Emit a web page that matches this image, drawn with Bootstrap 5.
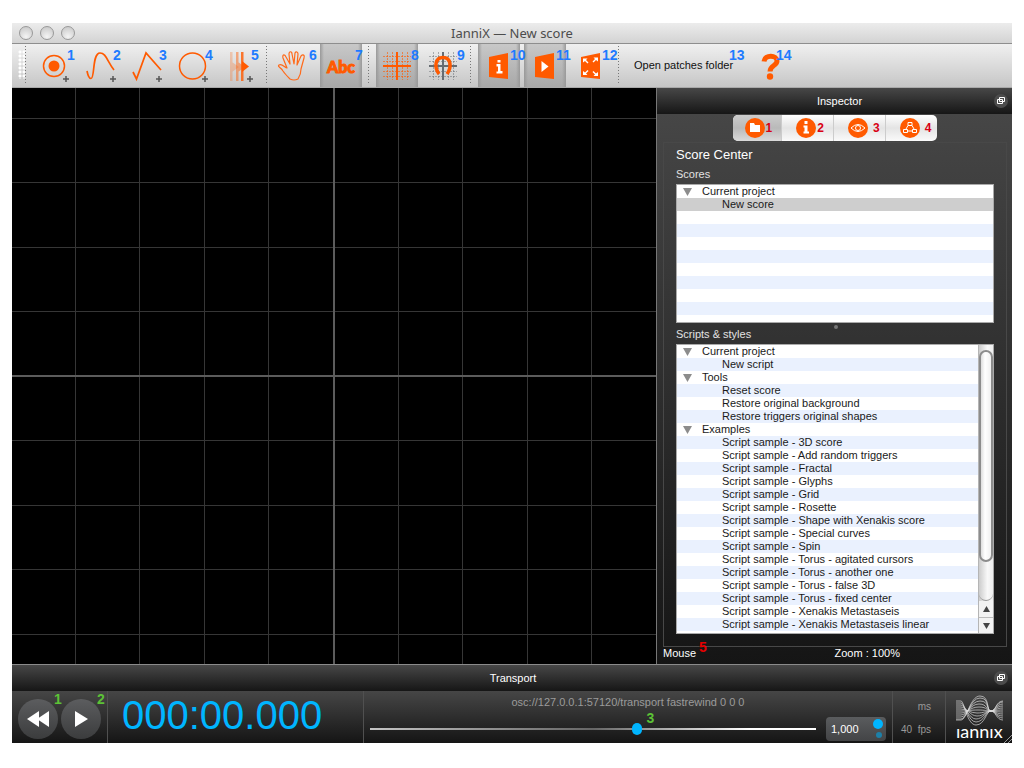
<!DOCTYPE html>
<html lang="en">
<head>
<meta charset="utf-8">
<meta name="viewport" content="width=device-width, initial-scale=1">
<title>IanniX — New score</title>
<link href="https://cdn.jsdelivr.net/npm/bootstrap@5.3.0/dist/css/bootstrap.min.css" rel="stylesheet">
<style>
body{font-family:"Liberation Sans",Arial,sans-serif;font-size:11px;line-height:13px;background:#fff;color:#fff;padding:23px 12px 25px}
button{font:inherit}
.plain-btn{border:0;background:none;padding:0;color:inherit}
.shrinkable{min-height:0}
.title-bar{height:21px;background:linear-gradient(#ececec,#d3d3d3);border-bottom:1px solid #8e8e8e;color:#4c4c4c;padding:0 7px}
.title-bar h1{font:13px/20px "Noto Sans",sans-serif}
.win-dots{gap:7px;width:56px}
.win-dot{width:14px;height:14px;border-radius:50%;border:1px solid #999;background:radial-gradient(circle at 50% 80%,#f4f4f4,#c4c4c4)}
.tool-bar{height:44px;background:linear-gradient(#f0f0f0,#c6c6c6);border-bottom:1px solid #a9a9a9;color:#111}
.tool-sep{width:1px;margin:2px 7px 2px 6px;background:repeating-linear-gradient(#777 0 1px,transparent 1px 3px)}
.grip{width:7px;margin:6px 0 8px 6px;background:radial-gradient(circle,#fff 1px,transparent 2px) 0 0/4px 4px}
.grip + .tool-sep{margin:2px 8px 2px 0}
.tool{width:42px;position:relative}
.tool.active{background:linear-gradient(90deg,#999,transparent 4px,transparent 38px,#999),linear-gradient(#c8c8c8,#a8a8a8)}
.tool svg{display:block;width:42px;height:42px}
.tip{position:absolute;z-index:1;top:5px;font:bold 14px/12px "Liberation Sans",Arial,sans-serif;color:#1e7bff}
.tool .tip{left:35px}
.adders .tip{left:33px}
.tool .tip.wide{left:32px}
.folder-btn{width:102px;position:relative;text-align:left;white-space:nowrap}
.folder-btn .tip{left:95px}
.dock-head{height:26px;background:linear-gradient(#474747,#161616)}
.float-btn{width:14px;height:14px;border-radius:50%;background:#4c4c4c}
.score-view{background:#000;min-width:0;min-height:0}
.inspector{width:356px;border-left:1px solid #777}
.inspector-body{background:linear-gradient(#464646,#151515)}
.tabs-row{width:204px;height:26px;border-radius:5px;overflow:hidden;background:linear-gradient(#fff,#e4e4e4 50%,#fafafa);margin-top:1px}
.tab-btn{flex:1 1 0;padding:0 0 0 13px;display:flex;align-items:center;border-right:1px solid #ccc;color:#d90013;font:bold 12px/12px "Liberation Sans",Arial,sans-serif}
.tab-btn:last-child{border-right:0}
.tab-btn.active{padding-left:11px;background:linear-gradient(#ccc,#b9b9b9 50%,#dadada)}
.group-box{border:1px solid #484848;margin:1px 5px 0 6px;padding:4px 12px 12px}
.group-box h2{font-size:13px;line-height:16px}
.list-label{padding:5px 0 3px;color:#e2e2e2}
.splitter{width:4px;height:4px;right:156px;top:2px;border-radius:50%;background:#777}
.tree{background:repeating-linear-gradient(#fff 0 13px,#eaf1fe 13px 26px);border:1px solid #aaa;color:#1a1a1a;overflow:hidden;min-height:0}
.tree ul{list-style:none;margin:0;padding:0}
.tree li{height:13px;padding-left:45px;white-space:nowrap}
.tree li.branch{padding-left:6px;display:flex;align-items:center}
.tree li.branch svg{width:9px;height:8px;margin-right:10px}
.tree li.selected{background:#cecece}
.scores{flex:138 1 0}
.scripts{flex:290 1 0}
.scroll-col{width:15px;border-left:1px solid #b5b5b5;background:linear-gradient(90deg,#ccc,#f8f8f8 60%,#eee)}
.scroll-thumb{flex:213 1 0;margin-top:5px;border:2px solid #8c8c8c;border-radius:7px;background:linear-gradient(90deg,#ddd,#fff 40%,#f0f0f0)}
.scroll-rest{flex:39 1 0;border-bottom:1px solid #999;border-radius:0 0 7px 7px}
.arrow-btn{height:16px;background:#f2f2f2;display:flex;align-items:center;justify-content:center}
.arrow-btn + .arrow-btn{border-top:1px solid #bbb}
.status{height:17px;padding:0 6px}
.status .tip{color:#e60000;left:42px;top:-6px}
.transport{border-top:1px solid #8b8b8b}
.transport-body{height:52px;background:linear-gradient(#464646,#151515);position:relative}
.play-group{padding:4px 6px 0;gap:3px}
.round-btn{width:40px;height:40px;border-radius:50%;background:linear-gradient(#5c5d5f,#3b3c3d);position:relative}
.transport .tip{color:#5cc236}
.round-btn .tip{left:36px;top:-6px}
.clock{width:256px;padding-left:14px;font-size:40px;line-height:48px;color:#00b5ff}
.vline{border-left:1px solid #505050}
.position{padding:5px 6px 2px}
.osc{color:#9b9b9b}
.pos-slider{appearance:none;width:100%;height:14px;background:linear-gradient(90deg,#c4c4c4,#666 50%,#fff 85%) center/100% 2px no-repeat;margin:0;display:block}
.pos-slider::-webkit-slider-thumb{appearance:none;width:10px;height:12px;border-radius:5px;background:#00b5ff}
.slider-box{margin-right:10px;position:relative}
.slider-box .tip{left:62%;top:-10px}
.speed{width:60px;height:24px;border-radius:4px;background:linear-gradient(#5a5c5e,#434446)}
.speed input{width:42px;border:0;background:none;color:#fff;padding:0 0 0 5px}
.rate{width:53px;color:#999;font-size:10px;padding:9px 14px 0 0;gap:10px}
.brand{width:67px;padding:4px 0 0 10px}
.brand text{font:18px Lato,sans-serif}
.resize-mark{position:absolute;right:0;bottom:0}
</style>
</head>
<body class="d-flex flex-column vh-100">
<header class="title-bar d-flex align-items-center">
  <div class="win-dots d-flex align-items-center"><span class="win-dot"></span><span class="win-dot"></span><span class="win-dot"></span></div>
  <h1 class="m-0 flex-grow-1 text-center">IanniX — New score</h1><div class="win-dots"></div>
</header>

<nav class="tool-bar d-flex" aria-label="Tools">
  <span class="grip"></span><span class="tool-sep"></span>
  <div class="adders d-flex gap-1">
    <button class="plain-btn tool" aria-label="Add trigger"><svg viewBox="0 0 42 42" fill="none" stroke="#ff5a00" stroke-width="1.5"><circle cx="20" cy="21" r="10.5"/><circle cx="20" cy="21" r="5.5" fill="#ff5a00" stroke="none"/><path d="M32 31v6M29 34h6" stroke="#555" stroke-width="1.500"/></svg><span class="tip">1</span></button>
    <button class="plain-btn tool" aria-label="Add curve"><svg viewBox="0 0 42 42" fill="none" stroke="#ff5a00" stroke-width="1.7"><path d="M7 26C8 31 9 33.500 11 33.500C15 33.500 12 8 20 8C26 8 27 16 34 25"/><path d="M33 31v6M30 34h6" stroke="#555" stroke-width="1.500"/></svg><span class="tip">2</span></button>
    <button class="plain-btn tool" aria-label="Add straight curve"><svg viewBox="0 0 42 42" fill="none" stroke="#ff5a00" stroke-width="1.7"><path d="M7 27L10.500 34L20 8L35 25"/><path d="M33 31v6M30 34h6" stroke="#555" stroke-width="1.500"/></svg><span class="tip">3</span></button>
    <button class="plain-btn tool" aria-label="Add ellipse"><svg viewBox="0 0 42 42" fill="none" stroke="#ff5a00" stroke-width="1.5"><circle cx="20.500" cy="21" r="13"/><path d="M33 31v6M30 34h6" stroke="#555" stroke-width="1.500"/></svg><span class="tip">4</span></button>
    <button class="plain-btn tool" aria-label="Add cursor"><svg viewBox="0 0 42 42" fill="#ff5a00"><g opacity=".25"><path d="M12 7h2.500v29H12zM14 17l7 5l-7 5z"/></g><g opacity=".45"><path d="M18 7h2.500v29H18zM20 17l7 5l-7 5z"/></g><path d="M23 7h2.500v29H23z" opacity=".8"/><path d="M24 16l7 5.500l-7 5.500z"/><path d="M32 31v6M29 34h6" stroke="#555" stroke-width="1.500"/></svg><span class="tip">5</span></button>
  </div>
  <span class="tool-sep"></span>
  <div class="d-flex gap-1">
    <button class="plain-btn tool" aria-label="Move"><svg viewBox="0 0 42 42" fill="none" stroke="#ff6a1a" stroke-width="1.200" stroke-linejoin="round"><path d="M16 34C13 31 11 29 9 26C7 22 3 22 5 20C8 18 11 23 13 23L9 13C8 9 11 9 12 12L16 19L15 9C15 6 18 6 18 9L20 19L21 8C22 6 24 7 24 9L23 20L27 11C29 9 31 10 30 13L27 24C27 29 26 31 24 34Q20 36 16 34Z"/></svg><span class="tip">6</span></button>
    <button class="plain-btn tool active" aria-label="Labels"><svg viewBox="0 0 42 42"><text x="21" y="28" text-anchor="middle" font-family="Lato" font-weight="900" font-size="16" fill="#ff5a00" stroke="#ff5a00">Abc</text></svg><span class="tip">7</span></button>
  </div>
  <span class="tool-sep"></span>
  <div class="d-flex gap-1">
    <button class="plain-btn tool active" aria-label="Grid"><svg viewBox="0 0 42 42" fill="none" stroke="#ff5a00"><path d="M7 11.500h28M7 16.500h28M7 26.500h28M7 31.500h28M11.500 7v28M16.500 7v28M26.500 7v28M31.500 7v28" stroke-dasharray="2 1" opacity=".6"/><path d="M7 21h28M21 7v28" stroke-width="2"/></svg><span class="tip">8</span></button>
    <button class="plain-btn tool" aria-label="Snap to grid"><svg viewBox="0 0 42 42" fill="none" stroke="#666c72"><path d="M7 11.500h28M7 16.500h28M7 26.500h28M7 31.500h28M11.500 7v28M16.500 7v28M26.500 7v28M31.500 7v28" stroke-dasharray="2 1" opacity=".5"/><path d="M7 21h28M21 7v28" stroke-width="2"/><path d="M17 29C12 22 13 12.500 21 12.500S30 22 25 29" stroke="#ff5a00" stroke-width="3.500"/></svg><span class="tip">9</span></button>
  </div>
  <span class="tool-sep"></span>
  <div class="d-flex gap-1">
    <button class="plain-btn tool active" aria-label="Show inspector"><svg viewBox="0 0 42 42" fill="#ff5a00"><path d="M11 12l19-4v26l-19-2z"/><path d="M18.500 19h4v7h2v2.500h-6v-2h1.500v-5h-1.500zM19.500 15h3v2.500h-3z" fill="#fff"/></svg><span class="tip wide">10</span></button>
    <button class="plain-btn tool active" aria-label="Show transport"><svg viewBox="0 0 42 42" fill="#ff5a00"><path d="M11 12l19-4v26l-19-2z"/><path d="M17.500 16l7 5.500l-7 5.500z" fill="#fff"/></svg><span class="tip wide">11</span></button>
    <button class="plain-btn tool" aria-label="Full screen"><svg viewBox="0 0 42 42" fill="#ff5a00"><path d="M11 12l19-4v26l-19-2z"/><path d="M13 13.500h4.500l-1.500 1.500l2.500 2.500l-1 1l-2.500-2.500l-2 1.500zM28 12.500h-4.500l1.500 1.500l-2.500 2.500l1 1l2.500-2.500l2 1.500zM13 30h4.500l-1.500-1.500l2.500-2.500l-1-1l-2.500 2.500l-2-1.500zM28 31h-4.500l1.500-1.500l-2.500-2.500l1-1l2.500 2.500l2-1.500z" fill="#fff"/></svg><span class="tip wide">12</span></button>
  </div>
  <span class="tool-sep"></span>
  <button class="plain-btn folder-btn ms-2">Open patches folder<span class="tip">13</span></button>
  <button class="plain-btn tool ms-2" aria-label="Help"><svg viewBox="0 0 42 42" fill="none" stroke="#ff5a00" stroke-width="5"><path d="M20 16.500C21 9 33 10 33 16C33 21 26 20 26 26.500"/><circle cx="26" cy="31.500" r="3.200" fill="#ff5a00" stroke="none"/></svg><span class="tip wide">14</span></button>
</nav>

<main class="shrinkable d-flex flex-grow-1">
  <section class="score-view flex-grow-1" aria-label="Score">
    <svg class="d-block w-100 h-100" viewBox="0 0 644 576" preserveAspectRatio="xMidYMid slice" shape-rendering="crispEdges"><path fill="#363636" d="M63 0h1v576h-1zM127 0h1v576h-1zM192 0h1v576h-1zM256 0h1v576h-1zM386 0h1v576h-1zM450 0h1v576h-1zM515 0h1v576h-1zM579 0h1v576h-1zM0 30h644v1H0zM0 94h644v1H0zM0 159h644v1H0zM0 223h644v1H0zM0 352h644v1H0zM0 417h644v1H0zM0 481h644v1H0zM0 546h644v1H0z"/><path fill="#5c5c5c" d="M321 0h2v576h-2zM0 287h644v2H0z"/></svg>
  </section>
  <aside class="inspector d-flex flex-column flex-shrink-0">
    <div class="dock-head d-flex align-items-center px-1"><span class="flex-grow-1 text-center ps-4">Inspector</span><button class="plain-btn float-btn" aria-label="Float inspector"><svg class="d-block" width="14" height="14" fill="#4c4c4c" stroke="#fff"><path d="M5.500 3.500h5v4h-5zM3.500 5.500h5v4h-5z"/></svg></button></div>
    <div class="inspector-body shrinkable d-flex flex-column flex-grow-1">
      <div class="tabs-row d-flex mx-auto flex-shrink-0">
        <button class="plain-btn tab-btn active" aria-label="Files"><svg width="22" height="22"><circle cx="11" cy="11" r="10" fill="#ff5a00"/><path d="M6 6h4l1 2h5v7H6z" fill="#fff"/></svg>1</button>
        <button class="plain-btn tab-btn" aria-label="Info"><svg width="22" height="22"><circle cx="11" cy="11" r="10" fill="#ff5a00"/><path d="M9.500 4h3v3h-3zM8.500 8.500h4v6h1.500v2H8.500v-2h1v-4h-1z" fill="#fff"/></svg>2</button>
        <button class="plain-btn tab-btn gap-1" aria-label="View"><svg width="22" height="22" fill="none" stroke="#fff"><circle cx="11" cy="11" r="10" fill="#ff5a00" stroke="none"/><path d="M4 11Q11 4 18 11Q11 18 4 11Z"/><circle cx="11" cy="11" r="2.500"/></svg>3</button>
        <button class="plain-btn tab-btn gap-1" aria-label="Network"><svg width="22" height="22" fill="none" stroke="#fff"><circle cx="11" cy="11" r="10" fill="#ff5a00" stroke="none"/><path d="M9 5.500h4v3H9zM4.500 12.500h4v3h-4zM13.500 12.500h4v3h-4zM9 8.500L7 12M13 8.500L15 12M8.500 14h5"/></svg>4</button>
      </div>
      <div class="group-box shrinkable d-flex flex-column flex-grow-1">
        <h2 class="m-0 fw-normal">Score Center</h2>
        <div class="list-label">Scores</div>
        <div class="tree scores"><ul>
          <li class="branch"><svg><path d="M0 0h9L4.500 8z" fill="#8c8c8c"/></svg>Current project</li><li class="selected">New score</li>
        </ul></div>
        <div class="list-label position-relative">Scripts &amp; styles<span class="splitter position-absolute"></span></div>
        <div class="tree scripts d-flex">
          <ul class="flex-grow-1">
            <li class="branch"><svg><path d="M0 0h9L4.500 8z" fill="#8c8c8c"/></svg>Current project</li><li>New script</li>
            <li class="branch"><svg><path d="M0 0h9L4.500 8z" fill="#8c8c8c"/></svg>Tools</li><li>Reset score</li><li>Restore original background</li><li>Restore triggers original shapes</li>
            <li class="branch"><svg><path d="M0 0h9L4.500 8z" fill="#8c8c8c"/></svg>Examples</li><li>Script sample - 3D score</li><li>Script sample - Add random triggers</li><li>Script sample - Fractal</li><li>Script sample - Glyphs</li><li>Script sample - Grid</li><li>Script sample - Rosette</li><li>Script sample - Shape with Xenakis score</li><li>Script sample - Special curves</li><li>Script sample - Spin</li><li>Script sample - Torus - agitated cursors</li><li>Script sample - Torus - another one</li><li>Script sample - Torus - false 3D</li><li>Script sample - Torus - fixed center</li><li>Script sample - Xenakis Metastaseis</li><li>Script sample - Xenakis Metastaseis linear</li>
          </ul>
          <div class="scroll-col d-flex flex-column"><div class="scroll-thumb"></div><div class="scroll-rest"></div>
            <button class="plain-btn arrow-btn" aria-label="Scroll up"><svg width="7" height="6"><path d="M0 6h7L3.500 0z" fill="#444"/></svg></button>
            <button class="plain-btn arrow-btn" aria-label="Scroll down"><svg width="7" height="6"><path d="M0 0h7L3.500 6z" fill="#444"/></svg></button></div>
        </div>
      </div>
      <div class="status d-flex position-relative"><span class="col-6">Mouse</span><span class="tip">5</span><span>Zoom : 100%</span></div>
    </div>
  </aside>
</main>

<footer class="transport">
  <div class="dock-head d-flex align-items-center px-1"><span class="flex-grow-1 text-center ps-3">Transport</span><button class="plain-btn float-btn" aria-label="Float transport"><svg class="d-block" width="14" height="14" fill="#4c4c4c" stroke="#fff"><path d="M5.500 3.500h5v4h-5zM3.500 5.500h5v4h-5z"/></svg></button></div>
  <div class="transport-body d-flex">
    <div class="play-group d-flex align-items-center">
      <button class="plain-btn round-btn" aria-label="Fast rewind"><svg class="d-block" width="40" height="40" fill="#fff"><path d="M9 20l12-8v16zM19 20l12-8v16z"/></svg><span class="tip">1</span></button>
      <button class="plain-btn round-btn" aria-label="Play"><svg class="d-block" width="40" height="40" fill="#fff"><path d="M14 12l13 8l-13 8z"/></svg><span class="tip">2</span></button>
    </div>
    <div class="vline clock flex-shrink-0">000:00.000</div>
    <div class="vline position d-flex flex-column justify-content-between flex-grow-1">
      <div class="osc text-center">osc://127.0.0.1:57120/transport fastrewind 0 0 0</div>
      <div class="d-flex align-items-center">
        <div class="slider-box flex-grow-1"><input class="pos-slider" type="range" min="0" max="100" value="60" aria-label="Position"><span class="tip">3</span></div>
        <div class="speed d-flex align-items-center"><input value="1,000" aria-label="Speed"><svg width="16" height="24"><circle cx="10" cy="7" r="5" fill="#00b5ff"/><circle cx="11" cy="18" r="3" fill="#1d80a8"/></svg></div>
      </div>
    </div>
    <div class="vline rate d-flex flex-column text-end"><span>ms</span><span>40&nbsp; fps</span></div>
    <div class="vline brand">
      <svg class="d-block" width="54" height="48" role="img" aria-label="Logo"><g fill="none" stroke="#ddd" stroke-width=".8" opacity=".85"><path d="M0 6H5C8 6 11 30 20 30S30 16 35 16S40 25 47 25M0 8H5C9 8 12 27 20 27S30 16 35 16S40 23 47 23M0 10H5C9 10 13 24 20 24S30 16 35 16S40 21 47 21M0 12H5C10 12 14 21 21 21S30 16 35 16S40 19 47 19M0 14H5C11 14 14 18 21 18S30 16 35 16S40 17 47 17M0 16H5C12 16 14 15 22 15S30 16 35 16S40 15 47 15M0 18H5C11 18 14 12 23 12S30 16 35 16S40 13 47 13M0 20H5C11 20 14 9 23 9S30 16 35 16S40 11 47 11M0 22H5C11 22 14 6 24 6S30 16 35 16S40 9 47 9M0 24H5C11 24 14 3 24 3S30 16 35 16S40 7 47 7M0 25H5C11 25 14 1 24 1S30 16 35 16S40 6 47 6"/></g><text x="0" y="43" fill="#fff">ıannıx</text></svg>
    </div>
    <svg class="resize-mark" width="8" height="8" stroke="#999"><path d="M0 8L8 0M4 8L8 4"/></svg>
  </div>
</footer>
<script src="https://cdn.jsdelivr.net/npm/bootstrap@5.3.0/dist/js/bootstrap.bundle.min.js"></script>
</body>
</html>
